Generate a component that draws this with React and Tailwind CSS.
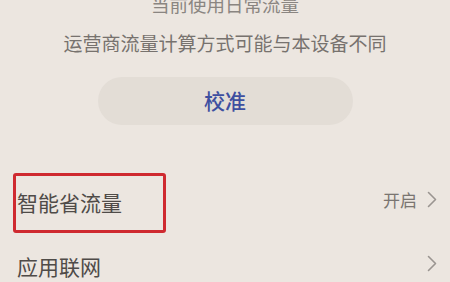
import React from "react";

function Chevron() {
  return (
    <svg width="10" height="17" viewBox="0 0 10 17" className="ml-[10px]">
      <polyline
        points="1.5,1.5 8.5,8.5 1.5,15.5"
        fill="none"
        stroke="#9a9591"
        strokeWidth="1.6"
        strokeLinecap="round"
        strokeLinejoin="round"
      />
    </svg>
  );
}

function Row({ title, value, marked }) {
  return (
    <div className="relative flex h-[64px] items-center justify-between pl-[17px] pr-[13px]">
      <span className="text-[21px] leading-none text-[#4f4b48]">{title}</span>
      <div className="flex items-center -mt-[5px]">
        {value && <span className="text-[17px] text-[#7a7571]">{value}</span>}
        <Chevron />
      </div>
      {marked && (
        <div className="absolute left-[13px] top-[3px] h-[60px] w-[153px] rounded-[3px] border-[3px] border-[#cf2a30]" />
      )}
    </div>
  );
}

export default function App() {
  return (
    <div
      className="w-[450px] h-[282px] overflow-hidden bg-[#ece6e0]"
      style={{ fontFamily: '"Noto Sans CJK SC", "Noto Sans", sans-serif' }}
    >
      <div className="flex flex-col items-center -mt-[9px]">
        <p className="text-[18.5px] leading-[26px] text-[#8a8581]">当前使用日常流量</p>
        <p className="mt-[13px] text-[19px] leading-[26px] text-[#77726e]">
          运营商流量计算方式可能与本设备不同
        </p>
        <button className="mt-[21px] flex h-[48px] w-[255px] items-center justify-center rounded-full bg-[#e3ddd6] text-[21px] font-medium text-[#3e4fa0]">
          校准
        </button>
      </div>
      <div className="mt-[45px]">
        <Row title="智能省流量" value="开启" marked />
        <Row title="应用联网" />
      </div>
    </div>
  );
}
